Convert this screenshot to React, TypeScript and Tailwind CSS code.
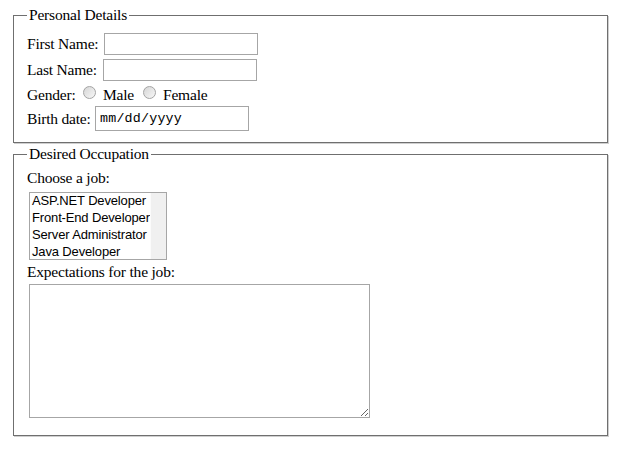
import React from 'react';

// Radio drawn by hand so it looks like the old gray gradient control
const Radio = ({ className = '' }: { className?: string }) => (
  <span
    className={`inline-block w-[13px] h-[13px] rounded-full border border-[#a4a4a4] bg-linear-to-br from-[#d6d6d6] to-[#f7f7f7] shrink-0 ${className}`}
  />
);

const jobs = ['ASP.NET Developer', 'Front-End Developer', 'Server Administrator', 'Java Developer'];

const App: React.FC = () => {
  return (
    <div className="bg-white min-h-[461px] pt-[6px] font-['Liberation_Serif','Times_New_Roman',serif] text-[15.5px] tracking-[-0.2px] text-black">
      {/* Personal details */}
      <fieldset className="m-0 ml-[13px] w-[595px] min-w-0 border border-[#6f6f6f] shadow-[1px_1px_0_#cfcfcf] px-[13px] pt-[7px] pb-[11px]">
        <legend className="px-[2px] leading-[18px]">Personal Details</legend>

        <div className="flex items-center h-[26px]">
          <span className="w-[77px] leading-[18px] whitespace-nowrap">First Name:</span>
          <input type="text" className="w-[154px] h-[22px] border border-[#a6a6a6] bg-white outline-none" />
        </div>
        <div className="flex items-center h-[26px]">
          <span className="w-[76px] leading-[18px] whitespace-nowrap">Last Name:</span>
          <input type="text" className="w-[154px] h-[22px] border border-[#a6a6a6] bg-white outline-none" />
        </div>
        <div className="flex items-center h-[23px]">
          <span className="w-[56px] leading-[18px] whitespace-nowrap">Gender:</span>
          <Radio className="mb-[4px]" />
          <span className="ml-[7px] w-[33px] leading-[18px]">Male</span>
          <Radio className="ml-[7px] mb-[4px]" />
          <span className="ml-[7px] leading-[18px]">Female</span>
        </div>
        <div className="flex items-center h-[25px]">
          <span className="w-[68px] leading-[18px] whitespace-nowrap">Birth date:</span>
          <div className="w-[154px] h-[25px] border border-[#a6a6a6] pl-[4px] flex items-center font-['Liberation_Mono','Courier_New',monospace] text-[13.33px] tracking-[0.2px] leading-none">
            mm/dd/yyyy
          </div>
        </div>
      </fieldset>

      {/* Desired occupation */}
      <fieldset className="m-0 mt-[2px] ml-[13px] w-[595px] min-w-0 border border-[#6f6f6f] shadow-[1px_1px_0_#cfcfcf] px-[13px] pt-[6px] pb-[17px]">
        <legend className="px-[2px] leading-[18px]">Desired Occupation</legend>

        <div className="leading-[18px]">Choose a job:</div>
        <div className="ml-[2px] mt-[5px] w-[138px] h-[68px] border border-[#a6a6a6] flex overflow-hidden">
          <div className="flex-1 pl-[2px] -mt-[1px] font-['Liberation_Sans',Arial,sans-serif] text-[13px] tracking-[-0.15px] leading-[17px] whitespace-nowrap overflow-hidden">
            {jobs.map(job => (
              <div key={job}>{job}</div>
            ))}
          </div>
          <div className="w-[16px] bg-[#f0f0f0] border-l border-[#fbfbfb]" />
        </div>

        <div className="mt-[3px] leading-[18px]">Expectations for the job:</div>
        <textarea className="block ml-[2px] mt-[3px] w-[341px] h-[134px] border border-[#a6a6a6] bg-white outline-none" />
      </fieldset>
    </div>
  );
};

export default App;
